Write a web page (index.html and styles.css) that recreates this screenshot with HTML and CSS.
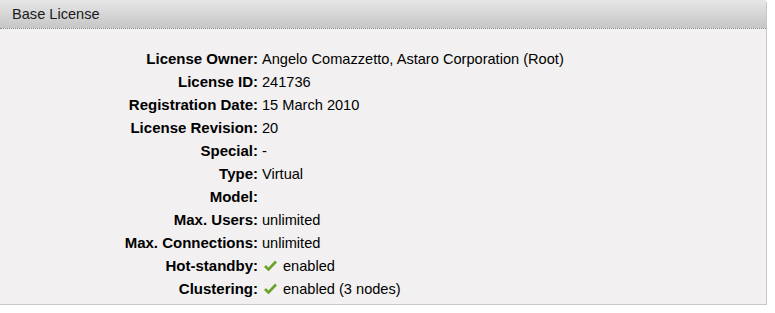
FILE: index.html
```html
<!DOCTYPE html>
<html>
<head>
    <title>Base License</title>
    <link rel="stylesheet" href="styles.css">
</head>
<body>
    <div class="panel">
        <div class="panel-header">Base License</div>
        <div class="panel-body">
            <div class="info-grid">
                <div class="label">License Owner:</div>
                <div class="value">Angelo Comazzetto, Astaro Corporation (Root)</div>
                <div class="label">License ID:</div>
                <div class="value">241736</div>
                <div class="label">Registration Date:</div>
                <div class="value">15 March 2010</div>
                <div class="label">License Revision:</div>
                <div class="value">20</div>
                <div class="label">Special:</div>
                <div class="value">-</div>
                <div class="label">Type:</div>
                <div class="value">Virtual</div>
                <div class="label">Model:</div>
                <div class="value"></div>
                <div class="label">Max. Users:</div>
                <div class="value">unlimited</div>
                <div class="label">Max. Connections:</div>
                <div class="value">unlimited</div>
                <div class="label">Hot-standby:</div>
                <div class="value"><svg class="check" width="13" height="11" viewBox="0 0 13 11"><path d="M1 6 L4.5 9.5 L12 1.5" fill="none" stroke="#6aa22a" stroke-width="2.6"/></svg>enabled</div>
                <div class="label">Clustering:</div>
                <div class="value"><svg class="check" width="13" height="11" viewBox="0 0 13 11"><path d="M1 6 L4.5 9.5 L12 1.5" fill="none" stroke="#6aa22a" stroke-width="2.6"/></svg>enabled (3 nodes)</div>
            </div>
        </div>
    </div>
</body>
</html>
```

FILE: styles.css
```css
body {
    margin: 0;
    background: #ffffff;
    font-family: "Liberation Sans", Arial, sans-serif;
    font-size: 14.6px;
    color: #000;
}

.panel {
    width: 766px;
    border-right: 1px solid #c8c8c8;
    border-bottom: 1px solid #c8c8c8;
    border-top-right-radius: 4px;
    background: #f2f0f0;
}

.panel-header {
    height: 28px;
    line-height: 28px;
    padding-left: 12px;
    background: linear-gradient(#e6e6e6, #c6c6c6);
    border-bottom: 1px dotted #8c8c8c;
    border-top-right-radius: 4px;
    color: #1a1a1a;
}

.panel-body {
    padding: 18px 0 4px 0;
}

.info-grid {
    display: grid;
    grid-template-columns: 258px auto;
    column-gap: 4px;
    grid-auto-rows: 23px;
    align-items: center;
}

.label {
    text-align: right;
    font-weight: bold;
    font-size: 15px;
}

.value {
    display: flex;
    align-items: center;
}

.check {
    margin: 0 6px 0 2px;
}
```
